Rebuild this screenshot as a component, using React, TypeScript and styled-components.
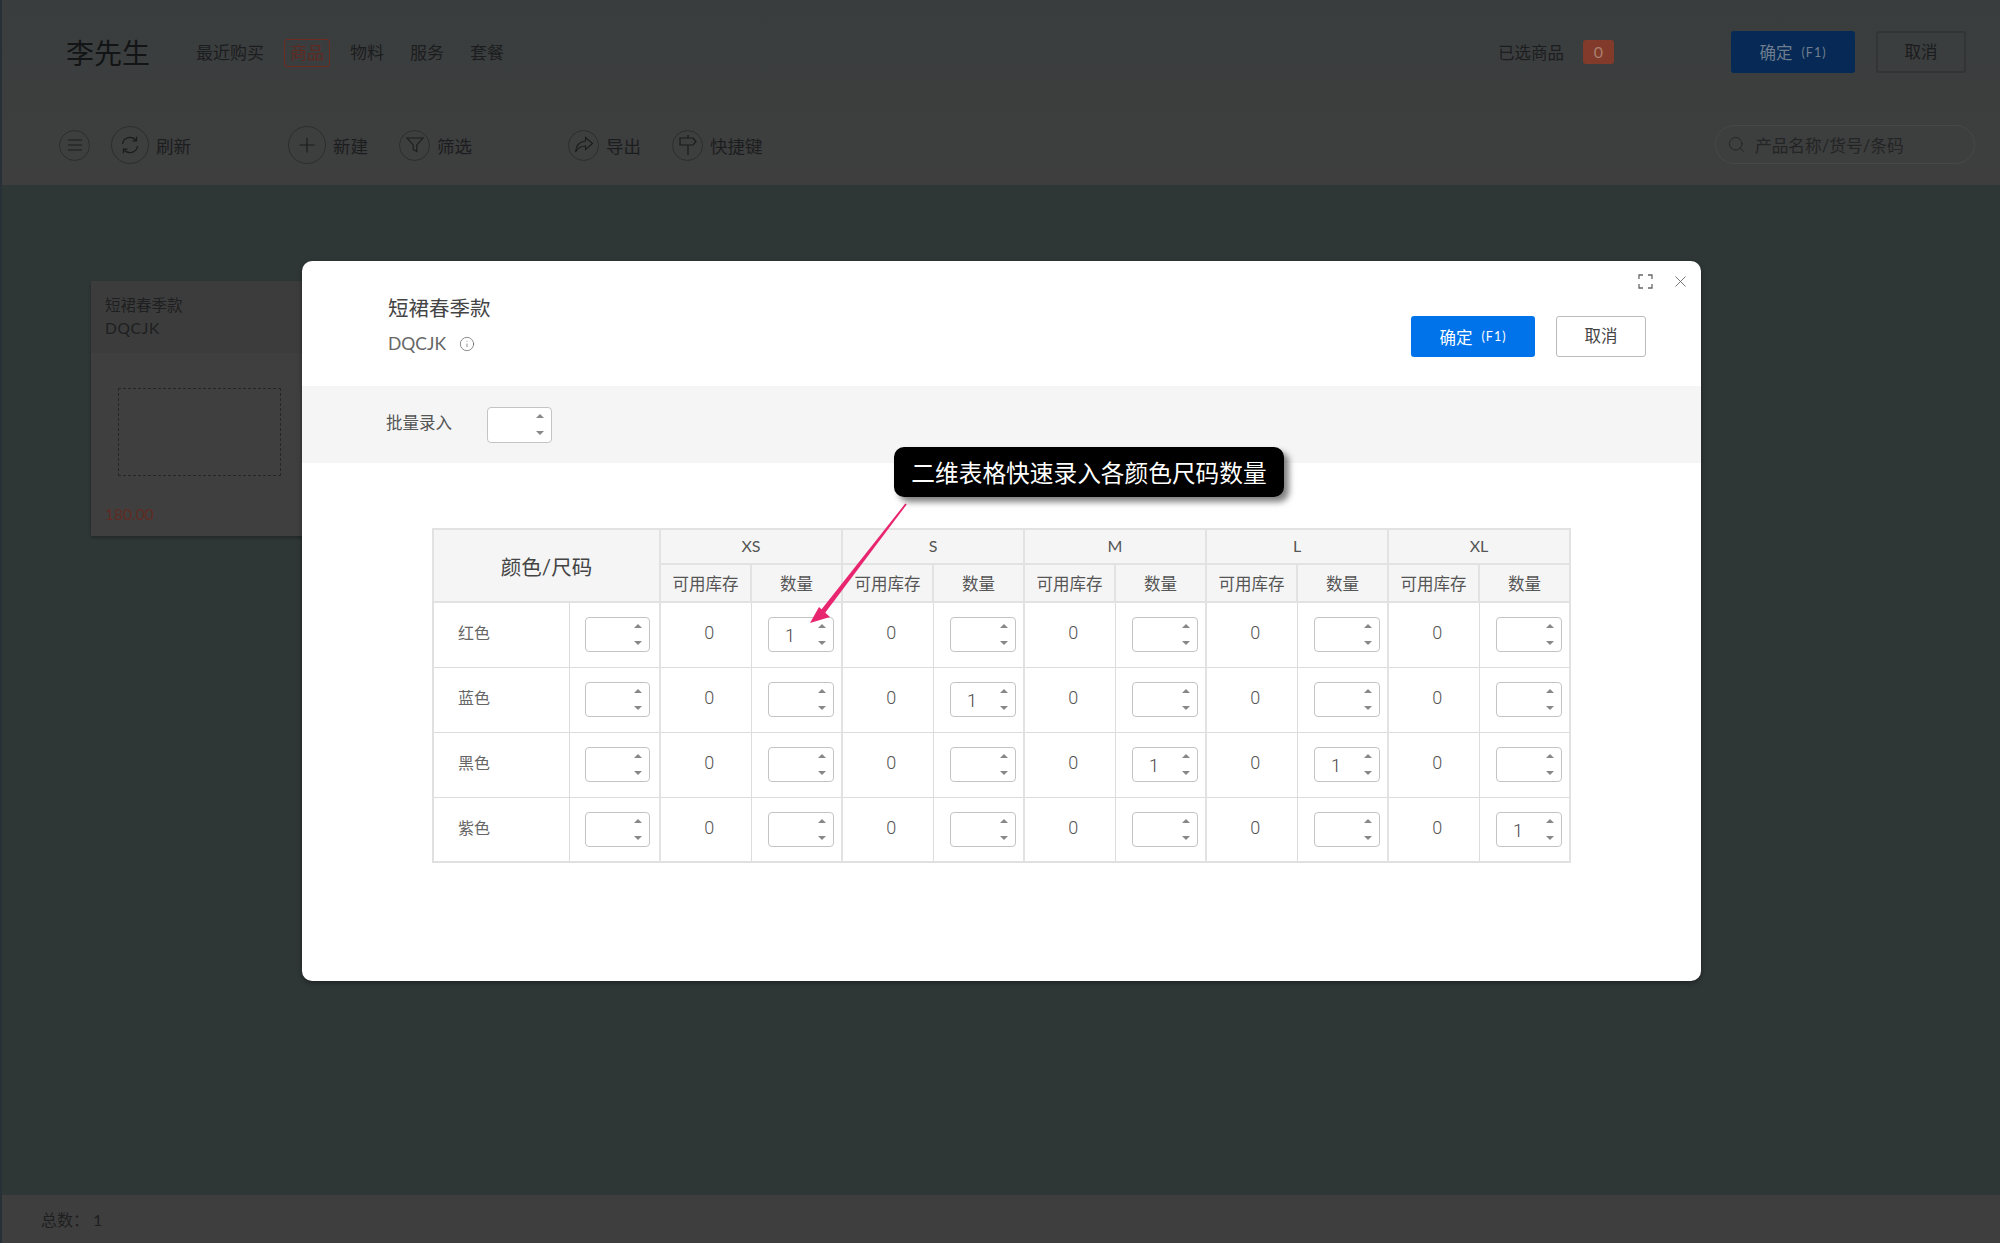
import styled, { createGlobalStyle } from "styled-components";
import { Plus, Search, X, Info } from "lucide-react";

const GlobalStyle = createGlobalStyle`
  html, body {
    margin: 0;
    padding: 0;
    background: #2f3636;
  }
  body {
    font-family: Lato, "Noto Sans CJK SC", sans-serif;
  }
  * {
    box-sizing: border-box;
  }
`;

const Page = styled.div`
  position: relative;
  width: 2000px;
  height: 1243px;
  display: flex;
  flex-direction: column;
  overflow: hidden;
  background: #2f3636;
  border-left: 2px solid #283037;
`;

const Header = styled.header`
  height: 185px;
  flex: none;
  display: flex;
  flex-direction: column;
  background: linear-gradient(to bottom, #393d3e 0%, #3c3e3e 50%, #3e3e3e 100%);
`;

const TopRow = styled.div`
  height: 104px;
  display: flex;
  align-items: center;
  padding-left: 64px;
`;

const Customer = styled.div`
  width: 130px;
  margin-top: 1px;
  font-size: 28px;
  line-height: 36px;
  color: #131415;
`;

const Tabs = styled.nav`
  display: flex;
  align-items: center;
  gap: 26px;
  margin-top: 2px;
`;

const Tab = styled.span<{ $active?: boolean }>`
  font-size: 17px;
  line-height: 26px;
  color: ${(p) => (p.$active ? "#5e2a22" : "#1c1d1e")};
  ${(p) =>
    p.$active
      ? `
    width: 46px;
    margin: 0 -6px;
    text-align: center;
    border: 1px solid #6e2b22;
    border-radius: 3px;
  `
      : ""}
`;

const Selected = styled.div`
  margin-left: auto;
  display: flex;
  align-items: center;
  font-size: 16.5px;
  color: #1c1d1e;
`;

const Badge = styled.span`
  width: 31px;
  height: 24px;
  margin-left: 19px;
  border-radius: 3px;
  background: #823a2a;
  color: #a8806f;
  font-size: 16px;
  line-height: 24px;
  text-align: center;
`;

const TopActions = styled.div`
  display: flex;
  gap: 21px;
  margin-left: 117px;
  margin-right: 34px;
`;

const DarkConfirm = styled.div`
  width: 124px;
  height: 42px;
  border-radius: 3px;
  background: #062a55;
  color: #6f7d8f;
  font-size: 16.5px;
  display: flex;
  align-items: center;
  justify-content: center;
  gap: 9px;
`;

const DarkCancel = styled.div`
  width: 90px;
  height: 42px;
  border-radius: 3px;
  border: 2px solid #333535;
  color: #1a1b1c;
  font-size: 16.5px;
  display: flex;
  align-items: center;
  justify-content: center;
  padding-bottom: 3px;
`;

const Small = styled.small`
  font-size: 12.5px;
  letter-spacing: 1px;
`;

const ToolRow = styled.div`
  flex: 1;
  display: flex;
  align-items: flex-start;
  padding-left: 57px;
  padding-top: 21px;
`;

const ToolGroup = styled.div<{ $width: number }>`
  width: ${(p) => p.$width}px;
  height: 40px;
  display: flex;
  align-items: center;
  flex: none;
`;

const Tool = styled.div<{ $gap?: number }>`
  display: flex;
  align-items: center;
  gap: 7px;
  margin-right: ${(p) => p.$gap ?? 0}px;
  font-size: 17.5px;
  color: #1c1d1e;
`;

const IconRing = styled.span<{ $size: number }>`
  width: ${(p) => p.$size}px;
  height: ${(p) => p.$size}px;
  flex: none;
  display: flex;
  align-items: center;
  justify-content: center;
  border: 1px solid #2b2d2e;
  border-radius: 50%;
  color: #1a1c1d;
`;

const SearchBox = styled.div`
  margin-left: auto;
  margin-right: 25px;
  width: 260px;
  height: 39px;
  flex: none;
  display: flex;
  align-items: center;
  gap: 9px;
  padding-left: 11px;
  border: 1px solid #474848;
  border-radius: 20px;
  color: #232425;
  font-size: 16.7px;
`;

const Content = styled.main`
  flex: 1;
  padding: 96px 0 0 89px;
`;

const Card = styled.section`
  width: 260px;
  height: 255px;
  background: #3f3f3f;
  box-shadow: 0 2px 3px rgba(0, 0, 0, 0.25);
`;

const CardHead = styled.div`
  height: 72px;
  padding: 13px 14px 0;
  background: #3c3c3c;
  font-size: 15.5px;
  line-height: 23px;
  color: #1e1f20;
`;

const CardCode = styled.div`
  letter-spacing: 0.7px;
`;

const CardImage = styled.div`
  width: 163px;
  height: 88px;
  margin: 35px 0 0 27px;
  border: 1px dashed #252626;
`;

const CardPrice = styled.div`
  margin: 28px 0 0 14px;
  font-size: 15.5px;
  line-height: 20px;
  color: #5f2b22;
`;

const Footer = styled.footer`
  height: 48px;
  flex: none;
  display: flex;
  align-items: center;
  padding-left: 39px;
  background: #3e3e3e;
  font-size: 16px;
  color: #1e1f20;
`;

const Modal = styled.div`
  position: absolute;
  left: 300px;
  top: 261px;
  width: 1399px;
  height: 720px;
  display: flex;
  flex-direction: column;
  background: #fff;
  border-radius: 10px;
  box-shadow: 0 2px 5px rgba(0, 0, 0, 0.35);
  overflow: hidden;
`;

const ModalHead = styled.div`
  height: 125px;
  flex: none;
  position: relative;
  display: flex;
  align-items: flex-start;
  justify-content: space-between;
  padding: 32px 55px 0 86px;
`;

const WindowIcons = styled.div`
  position: absolute;
  top: 11px;
  right: 11px;
  display: flex;
  align-items: center;
  gap: 18px;
  color: #666;
`;

const Title = styled.div`
  font-size: 20.5px;
  line-height: 30px;
  color: #444;
`;

const CodeLine = styled.div`
  display: flex;
  align-items: center;
  gap: 13px;
  margin-top: 9px;
  font-size: 17.5px;
  line-height: 24px;
  color: #666;
`;

const HeadActions = styled.div`
  display: flex;
  gap: 21px;
  margin-top: 23px;
`;

const Confirm = styled.button`
  width: 124px;
  height: 41px;
  display: flex;
  align-items: center;
  justify-content: center;
  gap: 9px;
  border: 0;
  border-radius: 3px;
  background: #0073ea;
  color: #fff;
  font-family: inherit;
  font-size: 16.5px;
`;

const Cancel = styled.button`
  width: 90px;
  height: 41px;
  padding: 0 0 3px;
  border: 1.5px solid #bbb;
  border-radius: 3px;
  background: #fff;
  color: #444;
  font-family: inherit;
  font-size: 16.5px;
`;

const BulkBar = styled.div`
  height: 77px;
  flex: none;
  display: flex;
  align-items: center;
  padding-left: 84px;
  gap: 35px;
  background: #f5f5f5;
  font-size: 16.5px;
  color: #555;
`;

const BulkLabel = styled.span`
  margin-bottom: 6px;
`;

const GridArea = styled.div`
  padding: 65px 0 0 130px;
`;

const Grid = styled.table`
  width: 1138px;
  table-layout: fixed;
  border-collapse: collapse;
  border: 2px solid #e0e0e0;
`;

const Head = styled.th<{ $size?: "big" | "mid" }>`
  height: ${(p) => (p.$size === "mid" ? "35px" : "38px")};
  padding: 0 0 ${(p) => (p.$size === "mid" ? "2px" : "0")};
  background: #f5f5f5;
  border: 2px solid #e2e2e2;
  font-weight: 400;
  font-size: ${(p) => (p.$size === "big" ? "20.5px" : p.$size === "mid" ? "16px" : "16.5px")};
  color: ${(p) => (p.$size === "big" ? "#444" : "#555")};
`;

const Cell = styled.td<{ $thick?: boolean }>`
  height: 65px;
  padding: 0;
  border: 1px solid #dcdcdc;
  ${(p) => (p.$thick ? "border-right: 2px solid #e2e2e2;" : "")}
`;

const ColorName = styled(Cell)`
  padding: 0 0 5px 24px;
  font-size: 16px;
  color: #666;
`;

const Stock = styled(Cell)`
  padding: 0 0 4px 7px;
  text-align: center;
  font-family: Roboto, sans-serif;
  font-weight: 300;
  font-size: 18px;
  color: #555;
`;

const InputCell = styled(Cell)<{ $pad: number }>`
  padding-right: ${(p) => p.$pad}px;

  & > div {
    margin-left: auto;
  }
`;

const NumberBox = styled.div<{ $width: number; $height?: number }>`
  position: relative;
  width: ${(p) => p.$width}px;
  height: ${(p) => p.$height ?? 35}px;
  padding: 3px 0 0 16px;
  background: #fff;
  border: 1.5px solid #c4c4c4;
  border-radius: 4px;
  font-family: Roboto, sans-serif;
  font-weight: 300;
  font-size: 18px;
  line-height: 30px;
  color: #444;
`;

const Spin = styled.span`
  position: absolute;
  right: 7px;
  top: 0;
  bottom: 0;
  display: flex;
  flex-direction: column;
  justify-content: center;
  gap: 13px;
`;

const Tri = styled.i<{ $down?: boolean }>`
  display: block;
  width: 0;
  height: 0;
  border-left: 4px solid transparent;
  border-right: 4px solid transparent;
  ${(p) =>
    p.$down ? "border-top: 4px solid #888;" : "border-bottom: 4px solid #888;"}
`;

const Callout = styled.div`
  position: absolute;
  left: 892px;
  top: 447px;
  width: 390px;
  height: 50px;
  display: flex;
  align-items: center;
  justify-content: center;
  padding-bottom: 1px;
  background: #000;
  border-radius: 10px;
  box-shadow: 5px 5px 6px rgba(0, 0, 0, 0.5);
  color: #fff;
  font-size: 23.7px;
  white-space: nowrap;
`;

const ArrowLayer = styled.svg`
  position: absolute;
  left: 798px;
  top: 500px;
  width: 115px;
  height: 130px;
`;

const sizes = ["XS", "S", "M", "L", "XL"];

const rows = [
  { name: "红色", values: ["1", "", "", "", ""] },
  { name: "蓝色", values: ["", "1", "", "", ""] },
  { name: "黑色", values: ["", "", "1", "1", ""] },
  { name: "紫色", values: ["", "", "", "", "1"] },
];

function Spinner() {
  return (
    <Spin>
      <Tri />
      <Tri $down />
    </Spin>
  );
}

function NumberInput({ value, width, height }: { value?: string; width: number; height?: number }) {
  return (
    <NumberBox $width={width} $height={height}>
      {value}
      <Spinner />
    </NumberBox>
  );
}

const MenuIcon = () => (
  <svg width="16" height="14" viewBox="0 0 16 14" fill="none" stroke="currentColor" strokeWidth="1">
    <path d="M1 2h14M1 7h14M1 12h14" />
  </svg>
);

const RefreshIcon = () => (
  <svg width="22" height="22" viewBox="0 0 22 22" fill="none" stroke="currentColor" strokeWidth="1.2">
    <path d="M3.5 10a7.6 7.6 0 0 1 13.6-3.6" />
    <path d="M18.5 12a7.6 7.6 0 0 1-13.6 3.6" />
    <path d="M17.6 2.8v4h-4M4.4 19.2v-4h4" />
  </svg>
);

const FilterIcon = () => (
  <svg width="20" height="20" viewBox="0 0 20 20" fill="none" stroke="currentColor" strokeWidth="1.1">
    <path d="M2 3h16l-6.200 7v6.500l-3.600-2V10z" />
  </svg>
);

const ShareIcon = () => (
  <svg width="20" height="18" viewBox="0 0 20 18" fill="none" stroke="currentColor" strokeWidth="1.1">
    <path d="M11.500 1.500 18.500 7.500l-7 6V10C7 10 4 11.500 1.500 16 2 10 5 5.500 11.500 5z" />
  </svg>
);

const SignIcon = () => (
  <svg width="20" height="22" viewBox="0 0 20 22" fill="none" stroke="currentColor" strokeWidth="1.2">
    <path d="M2 4h13l3 3.500-3 3.500H2zM10 4V1M10 11v10" />
  </svg>
);

const ExpandIcon = () => (
  <svg width="15" height="15" viewBox="0 0 15 15" fill="none" stroke="currentColor" strokeWidth="1.3">
    <path d="M1 5V1h4M10 1h4v4M14 10v4h-4M5 14H1v-4" />
  </svg>
);

export default function App() {
  return (
    <>
      <GlobalStyle />
      <Page>
        <Header>
          <TopRow>
            <Customer>李先生</Customer>
            <Tabs>
              <Tab>最近购买</Tab>
              <Tab $active>商品</Tab>
              <Tab>物料</Tab>
              <Tab>服务</Tab>
              <Tab>套餐</Tab>
            </Tabs>
            <Selected>
              已选商品
              <Badge>0</Badge>
            </Selected>
            <TopActions>
              <DarkConfirm>
                确定 <Small>(F1)</Small>
              </DarkConfirm>
              <DarkCancel>取消</DarkCancel>
            </TopActions>
          </TopRow>
          <ToolRow>
            <ToolGroup $width={229}>
              <Tool $gap={21}>
                <IconRing $size={31}>
                  <MenuIcon />
                </IconRing>
              </Tool>
              <Tool>
                <IconRing $size={38}>
                  <RefreshIcon />
                </IconRing>
                刷新
              </Tool>
            </ToolGroup>
            <ToolGroup $width={280}>
              <Tool $gap={31}>
                <IconRing $size={38}>
                  <Plus size={24} strokeWidth={1.2} />
                </IconRing>
                新建
              </Tool>
              <Tool>
                <IconRing $size={31}>
                  <FilterIcon />
                </IconRing>
                筛选
              </Tool>
            </ToolGroup>
            <ToolGroup $width={600}>
              <Tool $gap={31}>
                <IconRing $size={31}>
                  <ShareIcon />
                </IconRing>
                导出
              </Tool>
              <Tool>
                <IconRing $size={31}>
                  <SignIcon />
                </IconRing>
                快捷键
              </Tool>
            </ToolGroup>
            <SearchBox>
              <Search size={19} strokeWidth={1.2} />
              产品名称/货号/条码
            </SearchBox>
          </ToolRow>
        </Header>
        <Content>
          <Card>
            <CardHead>
              短裙春季款
              <CardCode>DQCJK</CardCode>
            </CardHead>
            <CardImage />
            <CardPrice>180.00</CardPrice>
          </Card>
        </Content>
        <Footer>总数： 1</Footer>

        <Modal>
          <ModalHead>
            <WindowIcons>
              <ExpandIcon />
              <X size={19} strokeWidth={1.1} />
            </WindowIcons>
            <div>
              <Title>短裙春季款</Title>
              <CodeLine>
                DQCJK
                <Info size={16} strokeWidth={1.1} />
              </CodeLine>
            </div>
            <HeadActions>
              <Confirm>
                确定 <Small>(F1)</Small>
              </Confirm>
              <Cancel>取消</Cancel>
            </HeadActions>
          </ModalHead>
          <BulkBar>
            <BulkLabel>批量录入</BulkLabel>
            <NumberInput width={65} height={36} />
          </BulkBar>
          <GridArea>
            <Grid>
              <colgroup>
                <col style={{ width: 136 }} />
                <col style={{ width: 91 }} />
                {sizes.map((s) => [
                  <col key={s + "a"} style={{ width: 91 }} />,
                  <col key={s + "b"} style={{ width: 91 }} />,
                ])}
              </colgroup>
              <thead>
                <tr>
                  <Head $size="big" colSpan={2} rowSpan={2}>
                    颜色/尺码
                  </Head>
                  {sizes.map((s) => (
                    <Head key={s} $size="mid" colSpan={2}>
                      {s}
                    </Head>
                  ))}
                </tr>
                <tr>
                  {sizes.map((s) => [
                    <Head key={s + "stock"}>可用库存</Head>,
                    <Head key={s + "qty"}>数量</Head>,
                  ])}
                </tr>
              </thead>
              <tbody>
                {rows.map((row) => (
                  <tr key={row.name}>
                    <ColorName>{row.name}</ColorName>
                    <InputCell $thick $pad={9}>
                      <NumberInput width={65} />
                    </InputCell>
                    {row.values.map((v, i) => [
                      <Stock key={i + "s"}>0</Stock>,
                      <InputCell key={i + "q"} $thick $pad={7}>
                        <NumberInput value={v} width={66} />
                      </InputCell>,
                    ])}
                  </tr>
                ))}
              </tbody>
            </Grid>
          </GridArea>
        </Modal>

        <ArrowLayer viewBox="0 0 115 130">
          <path d="M105.300 3.500 106.700 4.500 25 113 21 110z" fill="#e8256f" />
          <path d="M10 123 19 107 30 117z" fill="#e8256f" />
        </ArrowLayer>
        <Callout>二维表格快速录入各颜色尺码数量</Callout>
      </Page>
    </>
  );
}
